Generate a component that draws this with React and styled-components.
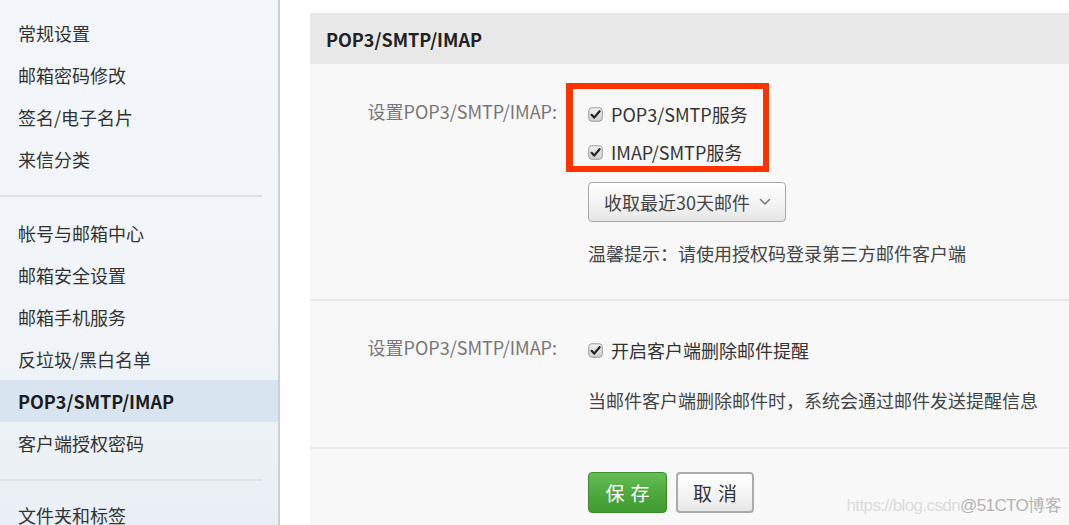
import React from "react";
import styled, { createGlobalStyle } from "styled-components";

const Global = createGlobalStyle`
  html, body { margin: 0; padding: 0; background: #fff; }
  body { font-family: "Noto Sans CJK SC", "Noto Sans", sans-serif; overflow: hidden; }
  #root { width: 1069px; height: 525px; overflow: hidden; }
`;

const Page = styled.div`
  display: flex;
  width: 1069px;
  height: 525px;
  position: relative;
`;

const Sidebar = styled.nav`
  width: 278px;
  flex: none;
  border-right: 2px solid #c7d1db;
  background: linear-gradient(180deg, #f3f7fb 0%, #f1f5f9 60%, #e9eff4 100%);
  padding-top: 12px;
  box-sizing: content-box;
`;

const NavItem = styled.div`
  height: 42px;
  line-height: 42px;
  padding-left: 18px;
  font-size: 18px;
  color: ${(p) => (p.$active ? "#1c1c1c" : "#333")};
  font-weight: ${(p) => (p.$active ? 700 : 400)};
  background: ${(p) => (p.$active ? "#d8e5f0" : "transparent")};
`;

const NavDivider = styled.div`
  width: 262px;
  height: 2px;
  background: #dde2e7;
  margin: ${(p) => p.$m || "15px 0"};
`;

const Main = styled.main`
  flex: 1;
  padding: 13px 0 0 30px;
  min-width: 0;
`;

const Panel = styled.section`
  background: #f8f8f8;
  height: 100%;
`;

const PanelHeader = styled.header`
  height: 51px;
  background: #e8e8e8;
  display: flex;
  align-items: center;
  padding-left: 16px;
  font-size: 18px;
  font-weight: 700;
  color: #222;
`;

const Section = styled.div`
  display: grid;
  grid-template-columns: 247px 1fr;
  column-gap: 31px;
  padding: ${(p) => p.$pad};
  border-bottom: 2px solid #e9e9e9;
`;

const Label = styled.div`
  text-align: right;
  font-size: 18px;
  line-height: 38px;
  color: #777;
  margin-top: -3px;
`;

const Values = styled.div`
  display: flex;
  flex-direction: column;
  align-items: flex-start;
`;

const CheckGroup = styled.div`
  position: relative;
  display: flex;
  flex-direction: column;
`;

const Annotation = styled.div`
  position: absolute;
  left: -22px;
  top: -12px;
  width: 203px;
  height: 89px;
  box-sizing: border-box;
  border: 6px solid #ff3300;
  border-left-width: 7px;
  pointer-events: none;
`;

const CheckRow = styled.label`
  display: flex;
  align-items: center;
  gap: 8px;
  height: 38px;
  font-size: 18px;
  color: #333;
`;

const SelectButton = styled.button`
  margin-top: 11px;
  width: 198px;
  height: 40px;
  box-sizing: border-box;
  display: flex;
  align-items: center;
  justify-content: space-between;
  padding: 0 14px 0 15px;
  border: 1.5px solid #a9a9a9;
  border-radius: 4px;
  background: linear-gradient(180deg, #ffffff 0%, #f2f2f2 60%, #e6e6e6 100%);
  font-family: inherit;
  font-size: 18px;
  color: #444;
`;

const Hint = styled.div`
  margin-top: 20px;
  font-size: 18px;
  line-height: 22px;
  color: #444;
`;

const Actions = styled.div`
  display: flex;
  gap: 9px;
  padding: 23px 0 0 278px;
`;

const Btn = styled.button`
  width: ${(p) => p.$w};
  height: 41px;
  box-sizing: border-box;
  border-radius: 4px;
  font-family: inherit;
  font-size: 19px;
  letter-spacing: 6px;
  text-indent: 6px;
  ${(p) =>
    p.$primary
      ? `
    border: 1px solid #3b8c2b;
    background: linear-gradient(180deg, #67bd57 0%, #4fa93f 50%, #3f9a2f 100%);
    color: #fff;
  `
      : `
    border: 2px solid #ababab;
    background: linear-gradient(180deg, #ffffff 0%, #f4f4f4 55%, #e7e7e7 100%);
    color: #333;
  `}
`;

const Watermark = styled.div`
  position: absolute;
  right: 8px;
  bottom: 8px;
  font-family: "Liberation Sans", Arial, sans-serif;
  font-size: 17px;
  letter-spacing: -0.6px;
  color: #dcdcdc;
  span { color: #b3b3b3; }
`;

function CheckBox() {
  return (
    <svg width="15" height="15" viewBox="0 0 15 15">
      <defs>
        <linearGradient id="cbg" x1="0" y1="0" x2="0" y2="1">
          <stop offset="0" stopColor="#f2f2f2" />
          <stop offset="1" stopColor="#cfcfcf" />
        </linearGradient>
      </defs>
      <rect x="0.75" y="0.75" width="13.5" height="13.5" rx="3" fill="url(#cbg)" stroke="#9c9c9c" strokeWidth="1" />
      <path d="M3.6 7.8 L6.2 10.6 L11.6 4.2" fill="none" stroke="#222" strokeWidth="2.2" strokeLinecap="round" strokeLinejoin="round" />
    </svg>
  );
}

function Chevron() {
  return (
    <svg width="12" height="8" viewBox="0 0 12 8">
      <path d="M1.5 1.5 L6 6 L10.5 1.5" fill="none" stroke="#777" strokeWidth="1.5" strokeLinecap="round" strokeLinejoin="round" />
    </svg>
  );
}

const groupA = ["常规设置", "邮箱密码修改", "签名/电子名片", "来信分类"];
const groupB = ["帐号与邮箱中心", "邮箱安全设置", "邮箱手机服务", "反垃圾/黑白名单", "POP3/SMTP/IMAP", "客户端授权密码"];

export default function App() {
  return (
    <>
      <Global />
      <Page>
        <Sidebar>
          {groupA.map((t) => (
            <NavItem key={t}>{t}</NavItem>
          ))}
          <NavDivider />
          {groupB.map((t) => (
            <NavItem key={t} $active={t === "POP3/SMTP/IMAP"}>{t}</NavItem>
          ))}
          <NavDivider $m="15px 0 13px" />
          <NavItem>文件夹和标签</NavItem>
        </Sidebar>
        <Main>
          <Panel>
            <PanelHeader>POP3/SMTP/IMAP</PanelHeader>
            <Section $pad="31px 0 35px">
              <Label>设置POP3/SMTP/IMAP:</Label>
              <Values>
                <CheckGroup>
                  <Annotation />
                  <CheckRow><CheckBox />POP3/SMTP服务</CheckRow>
                  <CheckRow><CheckBox />IMAP/SMTP服务</CheckRow>
                </CheckGroup>
                <SelectButton>
                  收取最近30天邮件
                  <Chevron />
                </SelectButton>
                <Hint>温馨提示：请使用授权码登录第三方邮件客户端</Hint>
              </Values>
            </Section>
            <Section $pad="30px 0 36px">
              <Label>设置POP3/SMTP/IMAP:</Label>
              <Values>
                <CheckRow><CheckBox />开启客户端删除邮件提醒</CheckRow>
                <Hint>当邮件客户端删除邮件时，系统会通过邮件发送提醒信息</Hint>
              </Values>
            </Section>
            <Actions>
              <Btn $primary $w="79px">保存</Btn>
              <Btn $w="78px">取消</Btn>
            </Actions>
          </Panel>
        </Main>
        <Watermark>https://blog.csdn<span>@51CTO博客</span></Watermark>
      </Page>
    </>
  );
}
